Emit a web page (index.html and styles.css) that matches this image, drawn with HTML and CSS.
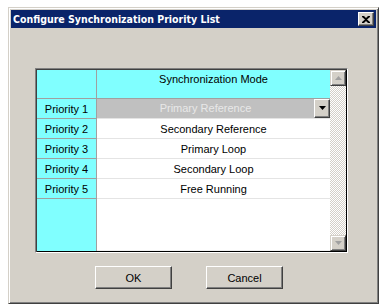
FILE: index.html
```html
<!DOCTYPE html>
<html lang="en">
<head>
  <meta charset="UTF-8" />
  <title>Configure Synchronization Priority List</title>
  <link rel="stylesheet" href="styles.css">
</head>
<body>
  <div class="window">
    <div class="titlebar">
      <span class="title">Configure Synchronization Priority List</span>
      <span class="close">
        <svg width="8" height="7" viewBox="0 0 8 7"><path d="M0 0h2l2 2 2-2h2v1l-3 2.5 3 2.5v1h-2l-2-2-2 2h-2v-1l3-2.5-3-2.5z" fill="#000"/></svg>
      </span>
    </div>

    <div class="content">
      <div class="grid-box">
        <div class="grid">
          <div class="row header">
            <div class="cell prio"></div>
            <div class="cell mode">Synchronization Mode</div>
          </div>
          <div class="row">
            <div class="cell prio">Priority 1</div>
            <div class="cell mode selected">
              <span class="sel-text">Primary Reference</span>
              <span class="drop"><svg width="7" height="4" viewBox="0 0 7 4"><path d="M0 0h7l-3.5 4z" fill="#000"/></svg></span>
            </div>
          </div>
          <div class="row">
            <div class="cell prio">Priority 2</div>
            <div class="cell mode">Secondary Reference</div>
          </div>
          <div class="row">
            <div class="cell prio">Priority 3</div>
            <div class="cell mode">Primary Loop</div>
          </div>
          <div class="row">
            <div class="cell prio">Priority 4</div>
            <div class="cell mode">Secondary Loop</div>
          </div>
          <div class="row">
            <div class="cell prio">Priority 5</div>
            <div class="cell mode">Free Running</div>
          </div>
          <div class="row filler">
            <div class="cell prio"></div>
            <div class="cell mode"></div>
          </div>
        </div>

        <div class="scrollbar">
          <span class="sb-btn"><svg width="7" height="4" viewBox="0 0 7 4"><path d="M0 4h7l-3.5-4z" fill="#a0a0a0"/></svg></span>
          <span class="sb-track"></span>
          <span class="sb-btn"><svg width="7" height="4" viewBox="0 0 7 4"><path d="M0 0h7l-3.5 4z" fill="#a0a0a0"/></svg></span>
        </div>
      </div>

      <div class="buttons">
        <button>OK</button>
        <button>Cancel</button>
      </div>
    </div>
  </div>
</body>
</html>
```

FILE: styles.css
```css
* {
  box-sizing: border-box;
}

body {
  margin: 0;
  background: #fff;
  font-family: "Liberation Sans", Arial, sans-serif;
  font-size: 11px;
  color: #000;
}

.window {
  margin: 7px 0 0 8px;
  width: 371px;
  height: 297px;
  background: #d4d0c8;
  border: 1px solid;
  border-color: #d4d0c8 #404040 #404040 #d4d0c8;
  box-shadow: inset 1px 1px #fff, inset -1px -1px #808080;
  padding: 2px;
  display: flex;
  flex-direction: column;
}

.titlebar {
  height: 18px;
  background: #0a246a;
  color: #fff;
  display: flex;
  align-items: center;
  justify-content: space-between;
  padding: 0 2px 0 2px;
}

.title {
  font-family: "DejaVu Sans Condensed", "DejaVu Sans", sans-serif;
  font-stretch: condensed;
  font-weight: bold;
  font-size: 10.5px;
}

.close {
  width: 16px;
  height: 14px;
  background: #d4d0c8;
  border: 1px solid;
  border-color: #fff #404040 #404040 #fff;
  box-shadow: inset -1px -1px #808080;
  display: flex;
  align-items: center;
  justify-content: center;
}

.content {
  flex: 1;
  padding: 40px 28px 0 24px;
  display: flex;
  flex-direction: column;
}

.grid-box {
  height: 185px;
  display: flex;
  border: 1px solid;
  border-color: #808080 #fff #fff #808080;
  box-shadow: inset 1px 1px #404040, inset -1px -1px #000;
  padding: 1px;
}

.grid {
  flex: 1;
  display: flex;
  flex-direction: column;
}

.row {
  display: flex;
  height: 20px;
}

.row.header {
  height: 29px;
}

.row.filler {
  flex: 1;
}

.cell {
  display: flex;
  align-items: center;
  justify-content: center;
  white-space: nowrap;
}

.prio {
  width: 60px;
  background: #80ffff;
  border-right: 1px solid #a0a0a0;
  border-bottom: 1px solid #a0a0a0;
}

.mode {
  flex: 1;
  background: #fff;
  border-bottom: 1px solid #e4e4e4;
}

.header .prio,
.header .mode {
  background: #80ffff;
  border-bottom: 1px solid #a0a0a0;
  align-items: flex-start;
  padding-top: 3px;
}

.filler .prio {
  border-bottom: none;
}

.filler .mode {
  border-bottom: 1px solid #f0f0f0;
}

.mode.selected {
  background: #c0c0c0;
  justify-content: space-between;
  padding: 0 0 1px 0;
}

.sel-text {
  flex: 1;
  text-align: center;
  color: #e8e8e8;
}

.drop {
  width: 16px;
  height: 19px;
  background: #d4d0c8;
  border: 1px solid;
  border-color: #fff #404040 #404040 #fff;
  box-shadow: inset -1px -1px #808080;
  display: flex;
  align-items: center;
  justify-content: center;
}

.scrollbar {
  width: 16px;
  display: flex;
  flex-direction: column;
}

.sb-btn {
  height: 16px;
  background: #d4d0c8;
  border: 1px solid;
  border-color: #d4d0c8 #404040 #404040 #d4d0c8;
  box-shadow: inset 1px 1px #fff, inset -1px -1px #808080;
  display: flex;
  align-items: center;
  justify-content: center;
}

.sb-track {
  flex: 1;
  background: repeating-conic-gradient(#d4d0c8 0 25%, #fff 0 50%) 0 0 / 2px 2px;
}

.buttons {
  display: flex;
  justify-content: center;
  gap: 34px;
  margin-top: 13px;
  padding-right: 5px;
}

button {
  width: 77px;
  height: 23px;
  font-family: "Liberation Sans", Arial, sans-serif;
  font-size: 11px;
  color: #000;
  background: #d4d0c8;
  border: 1px solid;
  border-color: #fff #404040 #404040 #fff;
  box-shadow: inset -1px -1px #808080;
  padding: 0;
}
```
